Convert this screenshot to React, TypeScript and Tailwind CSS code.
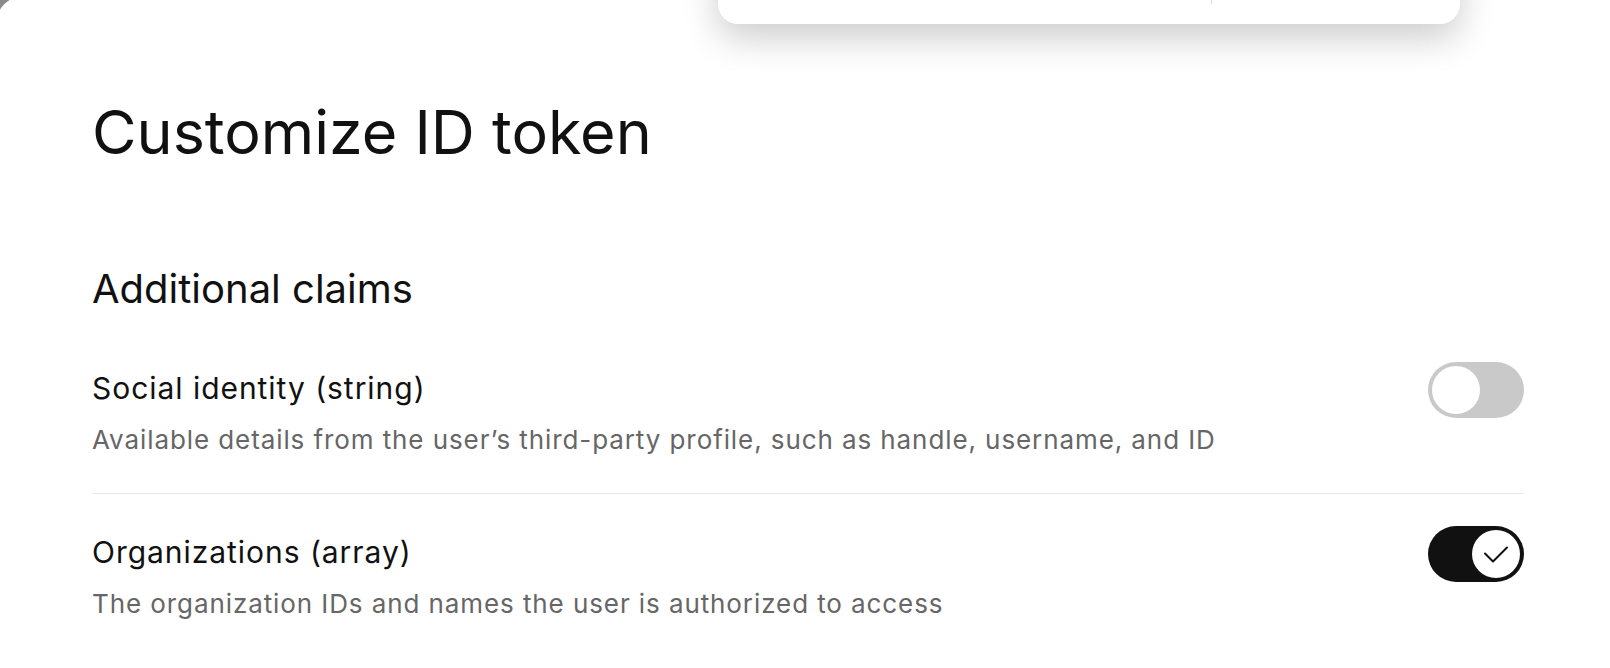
type Claim = { title: string; description: string; enabled: boolean };

const claims: Claim[] = [
  {
    title: "Social identity (string)",
    description: "Available details from the user’s third-party profile, such as handle, username, and ID",
    enabled: false,
  },
  {
    title: "Organizations (array)",
    description: "The organization IDs and names the user is authorized to access",
    enabled: true,
  },
];

function Toggle({ on }: { on: boolean }) {
  if (on) {
    return (
      <div className="flex h-[56px] w-[96px] shrink-0 items-center justify-end rounded-full bg-[#111111] p-[4px]">
        <div className="flex h-[48px] w-[48px] items-center justify-center rounded-full bg-white text-[#111111]">
          <svg width="48" height="48" viewBox="0 0 48 48" fill="none">
            <path d="M13 23.5L21 31.5L35 17.5" stroke="currentColor" strokeWidth="2" strokeLinecap="round" strokeLinejoin="round" />
          </svg>
        </div>
      </div>
    );
  }
  return (
    <div className="flex h-[56px] w-[96px] shrink-0 items-center justify-start rounded-full bg-[#c9c9c9] p-[4px]">
      <div className="h-[48px] w-[48px] rounded-full bg-white" />
    </div>
  );
}

export default function App() {
  return (
    <div className="relative h-[668px] w-[1610px] overflow-hidden bg-[#8a8a8a] font-['Inter',sans-serif] text-[#111111]">
      <div className="ml-[-4px] mt-[-4px] h-[672px] w-[1614px] rounded-tl-[28px] bg-white pl-[96px] pr-[86px] pt-[100px]">
        <h1 className="text-[61px] leading-[72px] font-normal">Customize ID token</h1>
        <h2 className="mt-[97px] text-[40px] leading-[48px] font-normal">Additional claims</h2>
        <div className="mt-[17px] flex flex-col">
          {claims.map((c, i) => (
            <div
              key={c.title}
              className={
                i === 0
                  ? "flex items-start justify-between pt-[32px] pb-[35px]"
                  : "flex items-start justify-between border-t border-[#e6e6e6] pt-[32px] pb-[35px]"
              }
            >
              <div className="flex flex-col gap-[16px] pt-[8px]">
                <div className="text-[30px] leading-[36px] tracking-[0.032em]">{c.title}</div>
                <div className="text-[26px] leading-[36px] tracking-[0.035em] text-[#666666]">{c.description}</div>
              </div>
              <Toggle on={c.enabled} />
            </div>
          ))}
        </div>
      </div>

      <div className="absolute left-[718px] top-[-60px] h-[84px] w-[742px] rounded-[20px] bg-white shadow-[0_14px_36px_rgba(0,0,0,0.2)]">
        <div className="absolute bottom-[20px] left-[493px] h-[20px] w-px bg-[#cfdaf5]" />
      </div>
    </div>
  );
}
